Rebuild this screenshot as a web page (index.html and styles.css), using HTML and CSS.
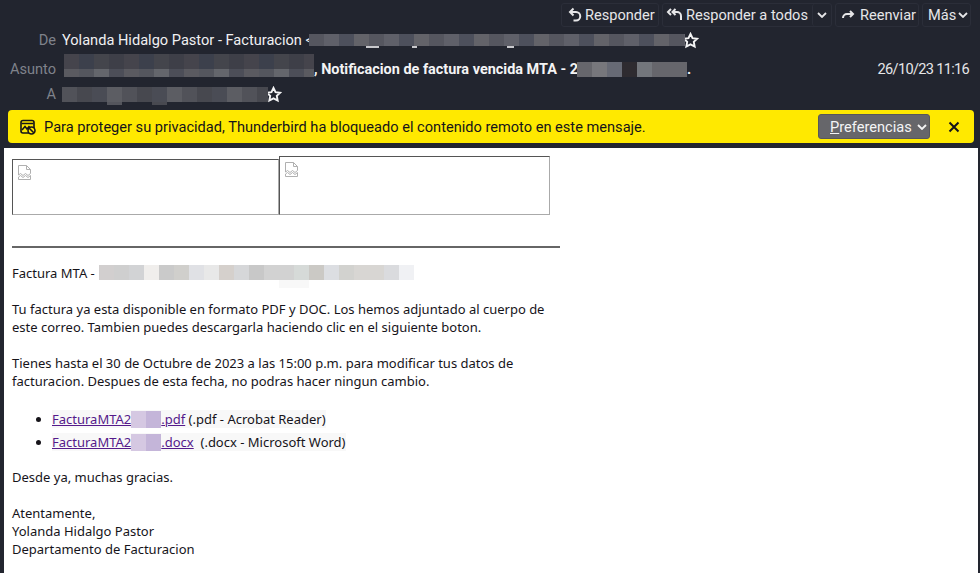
FILE: index.html
```html
<!DOCTYPE html>
<html lang="es">
<head>
<meta charset="utf-8">
<title>Mensaje</title>
<link rel="stylesheet" href="styles.css">
</head>
<body>
<header class="head">
  <nav class="actions">
    <button class="btn b-resp"><svg class="ic" viewBox="0 0 16 16"><path d="M6.500 1.500 3 5l3.500 3.500M3 5h6a4 4 0 0 1 0 8.500H6.500"/></svg>Responder</button>
    <div class="split">
      <button class="btn in b-all"><svg class="ic wide" viewBox="0 0 18 16"><path d="M5 2 2 5l3 3M9.500 2 6.500 5l3 3M6.500 5h4.500a4 4 0 0 1 4 4v4"/></svg>Responder a todos</button>
      <button class="btn in caret"><svg class="chev" viewBox="0 0 10 6"><path d="M1 1l4 4 4-4"/></svg></button>
    </div>
    <button class="btn b-fwd"><svg class="ic" viewBox="0 0 16 16"><path d="M10 4l3 3-3 3M13 7H7a4 4 0 0 0-4 4"/></svg>Reenviar</button>
    <button class="btn mas">Más<svg class="chev" viewBox="0 0 10 6"><path d="M1 1l4 4 4-4"/></svg></button>
  </nav>
  <div class="row r-de">
    <span class="lbl">De</span>
    <span class="val">Yolanda Hidalgo Pastor - Facturacion &lt;</span>
    <span class="px px-de"></span>
    <svg class="star" viewBox="0 0 16 16"><path d="M8 1.800l1.900 4 4.400.5-3.200 3 .8 4.400L8 11.600l-3.900 2.100.8-4.400-3.200-3 4.400-.5z"/></svg>
  </div>
  <div class="row r-as">
    <span class="lbl">Asunto</span>
    <span class="px px-as"></span>
    <b class="subj">, Notificacion de factura vencida MTA - 2</b>
    <span class="px px-as2"></span>
    <b class="subj">.</b>
    <time class="date">26/10/23 11:16</time>
  </div>
  <div class="row r-a">
    <span class="lbl">A</span>
    <span class="px px-a"></span>
    <svg class="star" viewBox="0 0 16 16"><path d="M8 1.800l1.900 4 4.400.5-3.200 3 .8 4.400L8 11.600l-3.900 2.100.8-4.400-3.200-3 4.400-.5z"/></svg>
  </div>
</header>
<div class="notice">
  <svg class="nic" viewBox="0 0 16 16"><rect x="1" y="1.500" width="13" height="12.500" rx="2"/><path d="M1.500 4.500h12M2 11l3-3.500 2 2.500 2.500-3"/><circle class="nb" cx="11.500" cy="11.500" r="3.500"/><path d="M9.200 9.200l4.600 4.600"/></svg>
  <span class="ntext">Para proteger su privacidad, Thunderbird ha bloqueado el contenido remoto en este mensaje.</span>
  <button class="pref"><span><u>P</u>referencias</span><svg class="chev" viewBox="0 0 10 6"><path d="M1 1l4 4 4-4"/></svg></button>
  <svg class="close" viewBox="0 0 12 12"><path d="M1.500 1.500l9 9M10.500 1.500l-9 9"/></svg>
</div>
<main class="msg">
  <div class="imgs">
    <div class="ph ph1"><svg class="broken" viewBox="0 0 13 15"><path d="M.5.5h8l4 4v4l-2.500 2-2.500-2-2.500 2-2.500-2-2 1.500zM8.500.5v4h4M.5 12l2-1.500 2.500 2 2.500-2 2.500 2 2.500-2v4H.5z"/></svg></div>
    <div class="ph ph2"><svg class="broken" viewBox="0 0 13 15"><path d="M.5.5h8l4 4v4l-2.500 2-2.500-2-2.500 2-2.500-2-2 1.500zM8.500.5v4h4M.5 12l2-1.500 2.500 2 2.500-2 2.500 2 2.500-2v4H.5z"/></svg></div>
  </div>
  <hr class="rule">
  <p class="title">Factura MTA - <span class="px px-f"></span></p>
  <p>Tu factura ya esta disponible en formato PDF y DOC. Los hemos adjuntado al cuerpo de<br>este correo. Tambien puedes descargarla haciendo clic en el siguiente boton.</p>
  <p>Tienes hasta el 30 de Octubre de 2023 a las 15:00 p.m. para modificar tus datos de<br>facturacion. Despues de esta fecha, no podras hacer ningun cambio.</p>
  <ul class="files">
    <li><span class="hl"><a href="#">FacturaMTA2<span class="px px-l"></span>.pdf</a> (.pdf - Acrobat Reader)</span></li>
    <li><span class="hl"><a href="#">FacturaMTA2<span class="px px-l"></span>.docx</a>&nbsp; (.docx - Microsoft Word)</span></li>
  </ul>
  <p>Desde ya, muchas gracias.</p>
  <p>Atentamente,<br>Yolanda Hidalgo Pastor<br>Departamento de Facturacion</p>
</main>
</body>
</html>
```
FILE: styles.css
```css
* { box-sizing: border-box; }
html, body { margin: 0; height: 100%; }
body {
  width: 980px; height: 573px; overflow: hidden;
  background: #22252f; color: #f4f4f5;
  font-family: Roboto, "Noto Sans", sans-serif;
}
button { font: inherit; color: inherit; background: none; border: 0; padding: 0; }
.head { height: 110px; position: relative; }
.actions { display: flex; justify-content: flex-end; gap: 3px; padding: 3px 9px 0 0; height: 27px; }
.btn {
  display: flex; align-items: center; gap: 2px; height: 24px; padding: 0 0 0 5px;
  border: 1px solid #2b2e39; border-radius: 3px; font-size: 14.6px; color: #e6e6e8; white-space: nowrap;
}
.b-resp { width: 98px; }
.b-fwd { width: 84px; padding-left: 4px; gap: 4px; }
.b-all { width: 149px; padding-left: 3px; }
.split { display: flex; border: 1px solid #2b2e39; border-radius: 3px; height: 24px; }
.btn.in { border: 0; height: 22px; }
.btn.caret { border-left: 1px solid #2b2e39; padding: 0 4px; width: 19px; }
.btn.mas { width: 49px; padding: 0 0 0 5px; gap: 2px; }
.ic { width: 16px; height: 16px; fill: none; stroke: #e6e6e8; stroke-width: 2; flex: none; }
.ic.wide { width: 18px; }
.chev { width: 10px; height: 6px; fill: none; stroke: currentColor; stroke-width: 1.800; flex: none; }
.row { display: flex; align-items: center; height: 24px; position: absolute; left: 0; right: 0; font-size: 14.6px; }
.r-de { top: 28px; }
.r-as { top: 57px; }
.r-a { top: 82px; }
.lbl { width: 56px; text-align: right; color: #7f828b; margin-right: 6px; flex: none; }
.val { color: #f0f0f2; white-space: nowrap; }
.subj { font-size: 14.45px; font-weight: 700; color: #f4f4f5; white-space: nowrap; }
.date { margin-left: auto; margin-right: 11px; color: #e6e6e8; letter-spacing: -0.7px; }
.star { width: 17px; height: 17px; margin-left: -3px; fill: none; stroke: #f4f4f5; stroke-width: 1.800; flex: none; }
.px { display: inline-block; flex: none; position: relative; }
.px-de {
  width: 376px; height: 12px; margin-left: -4px;
  background: repeating-linear-gradient(90deg, #55565f 0 15px, #5f6069 15px 30px, #4d505c 30px 45px, #636369 45px 60px);
}
.px-de::after {
  content: ""; position: absolute; left: 0; top: 12px; width: 100%; height: 2px;
  background: linear-gradient(90deg, transparent 0 57px, #c8c8cc 57px 70px, transparent 70px 103px, #c8c8cc 103px 108px, transparent 108px 198px, #c8c8cc 198px 205px, transparent 205px);
}
.px-as {
  width: 250px; height: 23px; margin: 0 0 7px 2px;
  background:
    repeating-linear-gradient(90deg, #5a5a60 0 15px, #54565e 15px 30px, #64666c 30px 45px, #4c4e58 45px 60px) 0 100%/100% 8px no-repeat,
    repeating-linear-gradient(90deg, #45444c 0 15px, #3c404c 15px 30px, #44454c 30px 45px, #3e3f48 45px 60px) 0 0/100% 15px no-repeat;
}
.px-as2 {
  width: 110px; height: 15px; margin-left: -1px;
  background: linear-gradient(90deg, #66666c 0 15px, #77777c 15px 30px, #676a75 30px 45px, #2e2b30 45px 60px, #73767c 60px 75px, #66666c 75px 110px);
}
.px-a {
  width: 206px; height: 15px;
  background: repeating-linear-gradient(90deg, #515259 0 15px, #47484f 15px 30px, #4a4c55 30px 45px, #5c5d63 45px 60px);
}
.px-a::after {
  content: ""; position: absolute; left: 0; top: 15px; width: 100%; height: 3px;
  background: linear-gradient(90deg, transparent 0 45px, #54555c 45px 60px, transparent 60px 90px, #484950 90px 105px, transparent 105px);
}
.notice {
  display: flex; align-items: center; height: 33px; margin: 0 6px 0 8px; padding: 0 14px 0 12px;
  background: #ffe900; border-radius: 4px; color: #15141a; font-size: 14.6px;
}
.nic { width: 16px; height: 16px; flex: none; fill: none; stroke: #15141a; stroke-width: 1.600; margin-right: 8px; }
.nb { fill: #ffe900; }
.ntext { flex: 1; white-space: nowrap; }
.pref {
  display: flex; align-items: center; gap: 5px; width: 112px; height: 25px; padding-left: 11px;
  background: #66666a; border: 1px solid #57575b; border-radius: 3px; color: #f4f4f5; font-size: 14.6px;
}
.close { width: 12px; height: 12px; flex: none; margin-left: 18px; fill: none; stroke: #15141a; stroke-width: 2; }
.msg {
  margin: 5px 2px 0 4px; height: 425px; padding: 8px 8px 0 8px;
  background: #fff; color: #16141a; font-family: "Noto Sans", sans-serif; font-size: 13px; line-height: 18px;
}
.imgs { display: flex; align-items: flex-end; width: 538px; }
.ph { border: 1px solid; border-color: #555 #aaa #aaa #555; padding: 5px; }
.ph1 { width: 267px; height: 56px; }
.ph2 { width: 271px; height: 59px; }
.broken { display: block; width: 13px; height: 15px; fill: none; stroke: #b0b0b0; stroke-width: 1; }
.rule { width: 548px; height: 2px; margin: 31px 0 16px; border: 0; background: #666; }
p { margin: 0 0 18px; }
.px-f {
  width: 315px; height: 15px; vertical-align: -2px; margin-left: 1px;
  background: linear-gradient(90deg, #d2cfcf 0 15px, #cfcfcf 15px 30px, #d2d3d5 30px 45px, #f0eeec 45px 60px, #cacaca 60px 75px, #d0cfcc 75px 90px, #e0e1e5 90px 105px, #e8e8e8 105px 120px, #d5d0cc 120px 135px, #d6d7d9 135px 150px, #c8c8c8 150px 165px, #d2d2d2 165px 195px, #d6dad8 195px 210px, #cbc9c5 210px 225px, #dcdee2 225px 240px, #d2d2cf 240px 255px, #d8d6d3 255px 285px, #dadbde 285px 300px, #f0f1f4 300px 315px);
}
.px-f::after { content: ""; position: absolute; left: 180px; top: 15px; width: 30px; height: 8px; background: #f8f8f8; }
.files { margin: 0 0 14px; padding: 0 0 0 40px; line-height: 23px; }
.hl { background: #f8f8f8; display: inline-block; line-height: 18px; }
a { color: #551a8b; }
.px-l {
  width: 30px; height: 17px; vertical-align: -4px;
  background: linear-gradient(90deg, #d5c8e2 0 15px, #c4b5d9 15px 30px);
}
```
